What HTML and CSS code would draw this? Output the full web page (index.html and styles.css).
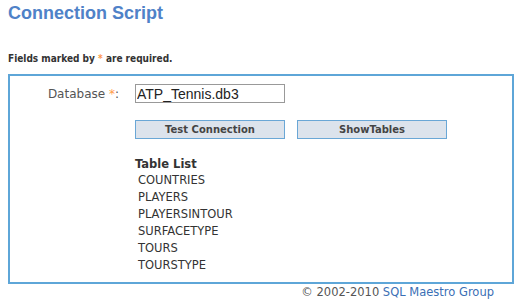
FILE: index.html
```html
<!DOCTYPE html>
<html>
<head>
<meta charset="utf-8">
<link rel="stylesheet" href="styles.css">
</head>
<body>
<h1 class="title">Connection Script</h1>
<p class="note">Fields marked by <span class="req">*</span> are required.</p>
<div class="box">
  <div class="row">
    <label class="label">Database <span class="req">*</span>:</label>
    <input class="field" type="text" value="ATP_Tennis.db3">
  </div>
  <div class="buttons">
    <button class="btn">Test Connection</button>
    <button class="btn">ShowTables</button>
  </div>
  <div class="tables">
    <div class="tables-head">Table List</div>
    <ul class="table-list">
      <li>COUNTRIES</li>
      <li>PLAYERS</li>
      <li>PLAYERSINTOUR</li>
      <li>SURFACETYPE</li>
      <li>TOURS</li>
      <li>TOURSTYPE</li>
    </ul>
  </div>
</div>
<div class="footer">© 2002-2010 <span class="brand">SQL Maestro Group</span></div>
</body>
</html>
```
FILE: styles.css
```css
html, body { margin: 0; padding: 0; background: #fff; }
body { padding: 0 12px 0 8px; font-family: "DejaVu Sans", Verdana, sans-serif; font-size: 11px; color: #333; }
.title {
  margin: 0; padding-top: 2px; height: 25px;
  font-family: "Liberation Sans", Arial, sans-serif; font-weight: bold; font-size: 18px;
  color: #4f82c8; line-height: 22px;
}
.note {
  margin: 0; padding-top: 26px; height: 21px;
  font-family: "DejaVu Sans Condensed", "DejaVu Sans", sans-serif;
  font-weight: bold; font-size: 10px; line-height: 12px; color: #333;
}
.req { color: #ff9a4a; }
.box {
  border: 2px solid #5ea6d8; height: 206px; box-sizing: content-box;
  padding: 0;
}
.row { display: flex; align-items: center; padding-top: 8px; height: 19px; }
.label { width: 109px; text-align: right; color: #555; font-size: 12px; padding-right: 16px; }
.field {
  margin: 0; width: 150px; height: 19px; box-sizing: border-box; border: 1px solid #999; padding: 0 1px;
  font-family: "Liberation Sans", Arial, sans-serif; font-size: 14px; color: #222; outline: none;
}
.buttons { display: flex; gap: 12px; margin-left: 125px; margin-top: 17px; }
.btn {
  margin: 0; width: 150px; height: 19px; box-sizing: border-box; padding: 0;
  background: #dce3ec; border: 1px solid #6aa7d6; border-radius: 0;
  font-family: "DejaVu Sans", Tahoma, sans-serif; font-weight: bold; font-size: 10px; color: #444;
}
.tables { margin-left: 125px; margin-top: 18px; }
.tables-head { font-weight: bold; font-size: 11.5px; color: #333; line-height: 14px; }
.table-list { list-style: none; margin: 0; padding: 1px 0 0 3px; }
.table-list li { height: 17px; line-height: 17px; font-size: 11.5px; color: #333; }
.footer { text-align: right; padding-right: 20px; padding-top: 1px; font-size: 11.5px; color: #555; line-height: 14px; }
.brand { color: #3b6fb5; }
```
